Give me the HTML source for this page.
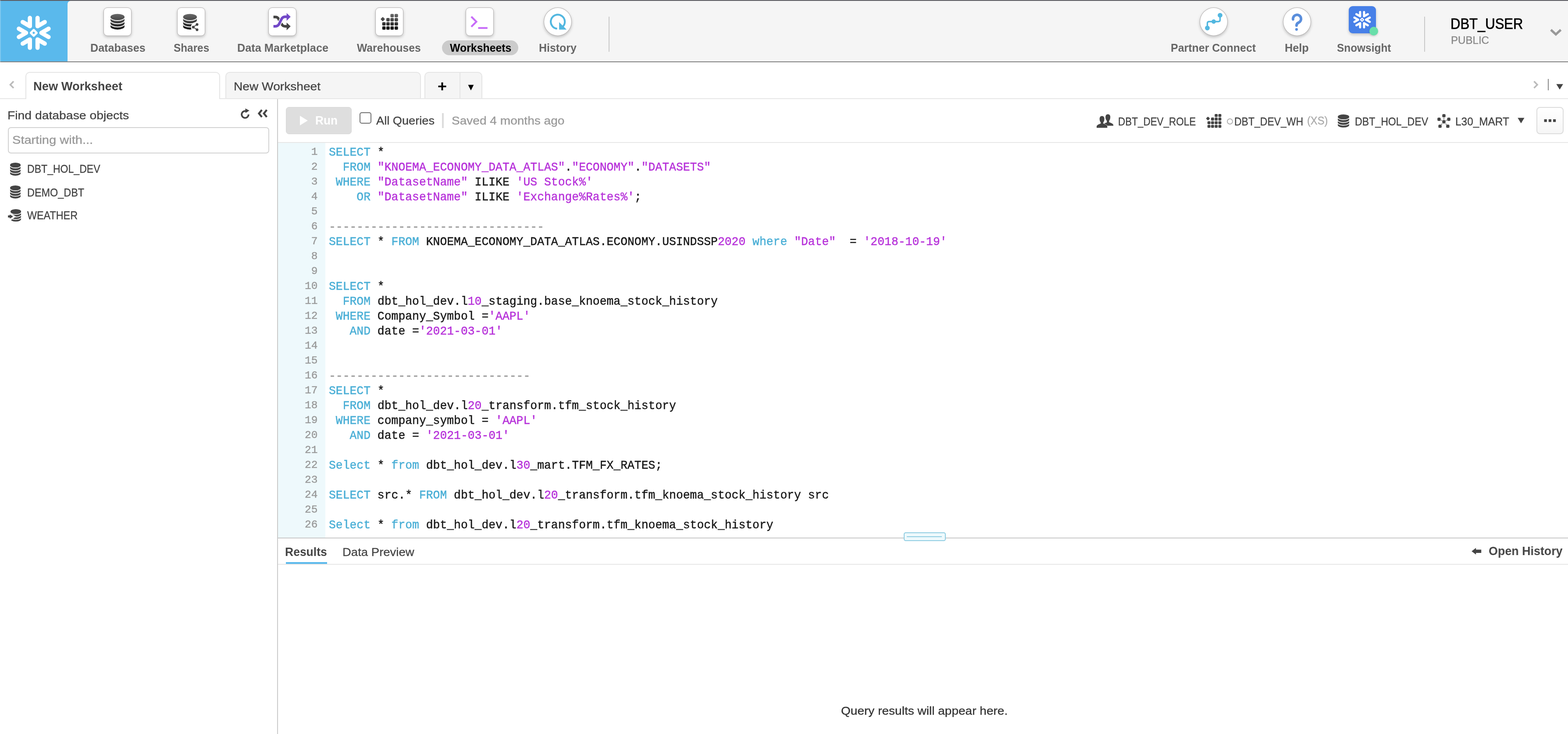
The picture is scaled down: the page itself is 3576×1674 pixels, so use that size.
<!DOCTYPE html>
<html lang="en">
<head>
<meta charset="utf-8">
<title>Snowflake Worksheets</title>
<style>
*{box-sizing:border-box}
html,body{margin:0;padding:0}
body{width:3576px;height:1674px;overflow:hidden;background:#fff;position:relative;will-change:transform;font-family:"Liberation Sans",sans-serif;color:#444}
.ab{position:absolute}
.tx{position:absolute;white-space:nowrap;line-height:1;transform-origin:0 0}
#top{position:absolute;left:0;top:0;width:3576px;height:142px;background:#f5f5f5;border-top:2px solid #5c5c62;border-bottom:2px solid #828282}
#logo{position:absolute;left:0;top:0;width:162px;height:138px;background:#5ab9ec}
#edge{position:absolute;left:0;top:0;width:2px;height:142px;background:rgba(255,255,255,.22)}
#navbg{position:absolute;left:154px;top:0;width:40px;height:138px;background:#f5f5f5;border-top-left-radius:7px}
.nb{position:absolute;top:17px;width:64px;height:65px;background:#fff;border:1px solid #b3b0b0;border-radius:9px;box-shadow:0 3px 6px rgba(0,0,0,.22)}
.nb svg{position:absolute;left:-1px;top:-1px}
.nb.rnd{border-radius:50%}
.vsep{position:absolute;width:2px;background:#c9c9c9}
#pill{position:absolute;left:1008px;top:92px;width:174px;height:34px;border-radius:17px;background:#cbcbcb}
.tab{position:absolute;top:164px;height:62px;border:2px solid #e5e5e5;border-bottom:none;border-radius:10px 10px 0 0;background:#f5f5f5}
.hl{position:absolute;height:2px;background:#e7e7e7}
#side{position:absolute;left:0;top:226px;width:632px;height:1448px;background:#fff}
#split{position:absolute;left:632px;top:226px;width:2px;height:1448px;background:#cacaca}
#search{position:absolute;left:18px;top:290px;width:596px;height:60px;border:2px solid #d2d2d2;border-radius:7px;background:#fff}
#run{position:absolute;left:652px;top:244px;width:150px;height:62px;border-radius:7px;background:#dedede;border:1px solid #d6d6d6}
#cb{position:absolute;left:820px;top:256px;width:26.5px;height:26px;border:2px solid #707070;border-radius:5px;background:#fff}
#more{position:absolute;left:3504px;top:244px;width:62px;height:62px;border:2px solid #dcdcdc;border-radius:8px;background:linear-gradient(#fff,#f6f6f6)}
#ed{position:absolute;left:634px;top:326px;width:2942px;height:900px;background:#fff;overflow:hidden;font-family:"Liberation Mono",monospace}
#gut{position:absolute;left:0;top:0;width:108px;height:900px;background:#eef9fc}
#lines{position:absolute;left:0;top:6px;width:2942px}
.ln{position:relative;height:34px;line-height:34px;white-space:pre}
.no{position:absolute;left:0;top:-1.8px;width:90.5px;text-align:right;font-size:24.5px;color:#999;-webkit-text-stroke-width:0.4px}
.cd{position:absolute;left:116px;top:-1px;font-size:26.4px;color:#1a1a1a;-webkit-text-stroke-width:0.5px;transform-origin:0 24px;transform:scaleY(1.06)}
.k{color:#4bafd6}
.s{color:#b733da}
.c{color:#999}
#grip{position:absolute;left:2060.6px;top:1214px;width:96px;height:20px;border:2px solid #90cde2;border-radius:4.5px;background:#eef9fc}
#grip i{position:absolute;left:5px;right:6.5px;top:7px;height:2px;background:#90cde2}
</style>
</head>
<body>
<div id="top">
  <div id="logo"></div><div id="navbg"></div>
</div>
<svg class="ab" style="left:0;top:0" width="154" height="142" viewBox="0 0 154 142"><g transform="translate(76.9,74.9) scale(1)" fill="none" stroke="#fff" stroke-width="9.7" stroke-linecap="round" stroke-linejoin="round"><path d="M33.87,-9.45 L17.5,0 L33.87,9.45" transform="rotate(0)"/><path d="M33.87,-9.45 L17.5,0 L33.87,9.45" transform="rotate(60)"/><path d="M33.87,-9.45 L17.5,0 L33.87,9.45" transform="rotate(120)"/><path d="M33.87,-9.45 L17.5,0 L33.87,9.45" transform="rotate(180)"/><path d="M33.87,-9.45 L17.5,0 L33.87,9.45" transform="rotate(240)"/><path d="M33.87,-9.45 L17.5,0 L33.87,9.45" transform="rotate(300)"/><rect x="-4.7" y="-4.7" width="9.4" height="9.4" transform="rotate(45)" stroke-width="4.9"/></g></svg>
<div class="nb" style="left:236px"><svg width="64" height="64" viewBox="0 0 64 64"><defs><linearGradient id="gd" gradientUnits="userSpaceOnUse" x1="0" y1="14" x2="0" y2="51"><stop offset="0" stop-color="#6b6b6b"/><stop offset="1" stop-color="#141414"/></linearGradient></defs><path d="M16,21.7 L16,43.400000000000006 A16,7 0 0 0 48,43.400000000000006 L48,21.7 Z" fill="url(#gd)"/><path d="M15,21.70 A17,8.3 0 0 0 49,21.70" fill="none" stroke="#fff" stroke-width="2.0"/><path d="M15,28.93 A17,8.3 0 0 0 49,28.93" fill="none" stroke="#fff" stroke-width="2.0"/><path d="M15,36.17 A17,8.3 0 0 0 49,36.17" fill="none" stroke="#fff" stroke-width="2.0"/><ellipse cx="32" cy="21.7" rx="16" ry="7" fill="url(#gd)"/></svg></div>
<div class="nb" style="left:404px"><svg width="64" height="64" viewBox="0 0 64 64"><defs><linearGradient id="gs" gradientUnits="userSpaceOnUse" x1="0" y1="14" x2="0" y2="51"><stop offset="0" stop-color="#6b6b6b"/><stop offset="1" stop-color="#141414"/></linearGradient></defs><path d="M13.600000000000001,21.7 L13.600000000000001,43.400000000000006 A15.7,7 0 0 0 45.0,43.400000000000006 L45.0,21.7 Z" fill="url(#gs)"/><path d="M12.600000000000001,21.70 A16.7,8.3 0 0 0 46.0,21.70" fill="none" stroke="#fff" stroke-width="2.0"/><path d="M12.600000000000001,28.93 A16.7,8.3 0 0 0 46.0,28.93" fill="none" stroke="#fff" stroke-width="2.0"/><path d="M12.600000000000001,36.17 A16.7,8.3 0 0 0 46.0,36.17" fill="none" stroke="#fff" stroke-width="2.0"/><ellipse cx="29.3" cy="21.7" rx="15.7" ry="7" fill="url(#gs)"/><circle cx="43" cy="45" r="11.5" fill="#fff"/><g fill="#444" stroke="#444" stroke-width="1.8"><path d="M45.4,38.8 L36.7,44.8 L45.4,50.8" fill="none"/><circle cx="45.4" cy="38.8" r="2.2"/><circle cx="36.7" cy="44.8" r="2.2"/><circle cx="45.4" cy="50.8" r="2.2"/></g></svg></div>
<div class="nb" style="left:612px"><svg width="64" height="64" viewBox="0 0 64 64"><g fill="none" stroke-width="6"><path d="M11.6,21.8 H16 C22,21.8 23.5,26 25.2,30" stroke="#444"/><path d="M29.5,36 C31,40 33,42.9 38,42.9 H42" stroke="#444"/><path d="M17,42.9 C23,42.9 24.5,38 27.3,32 C30,26 32,21.2 37,21.2" stroke="#fff" stroke-width="9"/><path d="M11.6,42.9 H16 C23,42.9 24.5,38 27.3,32 C30,26 32,21.2 38,21.2 H42" stroke="#7248c8"/></g><path d="M41.6,12.8 L50.8,21.2 L41.6,30.5 Z" fill="#7248c8"/><path d="M41.6,34.6 L50.8,42.9 L41.6,52 Z" fill="#444"/></svg></div>
<div class="nb" style="left:856px"><svg width="64" height="64" viewBox="0 0 64 64"><defs><linearGradient id="gw" gradientUnits="userSpaceOnUse" x1="0" y1="14" x2="0" y2="51"><stop offset="0" stop-color="#6b6b6b"/><stop offset="1" stop-color="#101010"/></linearGradient></defs><g fill="url(#gw)"><rect x="34.4" y="14.7" width="7.8" height="7.8" rx="2"/><rect x="43.9" y="14.7" width="7.8" height="7.8" rx="2"/><rect x="25.0" y="24.0" width="7.8" height="7.8" rx="2"/><rect x="34.4" y="24.0" width="7.8" height="7.8" rx="2"/><rect x="43.9" y="24.0" width="7.8" height="7.8" rx="2"/><rect x="15.7" y="33.5" width="7.8" height="7.8" rx="2"/><rect x="25.0" y="33.5" width="7.8" height="7.8" rx="2"/><rect x="34.4" y="33.5" width="7.8" height="7.8" rx="2"/><rect x="43.9" y="33.5" width="7.8" height="7.8" rx="2"/><rect x="15.7" y="42.9" width="7.8" height="7.8" rx="2"/><rect x="25.0" y="42.9" width="7.8" height="7.8" rx="2"/><rect x="34.4" y="42.9" width="7.8" height="7.8" rx="2"/><rect x="43.9" y="42.9" width="7.8" height="7.8" rx="2"/><rect x="13.3" y="22.9" width="7.4" height="7.4" rx="1.6" transform="rotate(45 17 26.6)"/></g></svg></div>
<div class="nb" style="left:1062px"><svg width="64" height="64" viewBox="0 0 64 64"><path d="M12.9,21.1 L24.4,32.5 L12.9,43.9" fill="none" stroke="#c76cf8" stroke-width="4.2"/><rect x="28.5" y="44.8" width="21.3" height="4.1" fill="#c76cf8"/></svg></div>
<div class="nb rnd" style="left:1240px"><svg width="64" height="64" viewBox="0 0 64 64"><path d="M30.6,48.4 A16,16 0 1 1 42.9,44.3" fill="none" stroke="#52b7e0" stroke-width="4.2"/><path d="M35.1,33.5 L35.1,50.6 L52.3,50.6 Z" fill="#52b7e0"/></svg></div>
<div class="nb rnd" style="left:2736px"><svg width="64" height="64" viewBox="0 0 64 64"><g fill="#52b7e0"><circle cx="46.5" cy="17.8" r="5.4"/><circle cx="32" cy="32.2" r="5"/><circle cx="17.5" cy="46.9" r="5.4"/></g><path d="M17.5,46.9 V36.2 Q17.5,32.2 21.5,32.2 H42.5 Q46.5,32.2 46.5,28.2 V17.8" fill="none" stroke="#52b7e0" stroke-width="3.4"/></svg></div>
<div class="nb rnd" style="left:2926px"><svg width="64" height="64" viewBox="0 0 64 64"><path d="M22.9,27.2 A9.2,9.2 0 1 1 35.5,34.6 Q30.9,36.4 30.9,41.3" fill="none" stroke="#5a8edc" stroke-width="6" stroke-linecap="round"/><circle cx="30.9" cy="50" r="3.1" fill="#5a8edc"/></svg></div>
<div id="edge"></div>
<div id="pill"></div>
<span class="tx" style="left:205.82px;top:97px;font-size:25px;font-weight:bold;transform:scaleX(1.0048);color:#666;">Databases</span><span class="tx" style="left:395.93px;top:97px;font-size:25px;font-weight:bold;transform:scaleX(0.9738);color:#666;">Shares</span><span class="tx" style="left:540.51px;top:97px;font-size:25px;font-weight:bold;transform:scaleX(1.0117);color:#666;">Data Marketplace</span><span class="tx" style="left:814.43px;top:97px;font-size:25px;font-weight:bold;transform:scaleX(0.9864);color:#666;">Warehouses</span><span class="tx" style="left:1025.52px;top:97px;font-size:25px;font-weight:bold;transform:scaleX(0.9935);color:#000;">Worksheets</span><span class="tx" style="left:1228.93px;top:97px;font-size:25px;font-weight:bold;transform:scaleX(0.9971);color:#666;">History</span><span class="tx" style="left:2669.73px;top:97px;font-size:25px;font-weight:bold;transform:scaleX(0.998);color:#666;">Partner Connect</span><span class="tx" style="left:2929.71px;top:97px;font-size:25px;font-weight:bold;transform:scaleX(1.0113);color:#666;">Help</span><span class="tx" style="left:3049.13px;top:97px;font-size:25px;font-weight:bold;transform:scaleX(0.9768);color:#666;">Snowsight</span>
<div class="vsep" style="left:1388px;top:38px;height:80px"></div>
<div class="vsep" style="left:3248px;top:38px;height:80px"></div>
<div class="ab" style="left:3076px;top:14px;width:62px;height:62px;border-radius:9px;background:#4780e8;box-shadow:0 3px 6px rgba(0,0,0,.2)"></div>
<svg class="ab" style="left:3076px;top:14px" width="62" height="62" viewBox="0 0 62 62"><g transform="translate(30.4,31) scale(0.515)" fill="none" stroke="#fff" stroke-width="9.7" stroke-linecap="round" stroke-linejoin="round"><path d="M33.87,-9.45 L17.5,0 L33.87,9.45" transform="rotate(0)"/><path d="M33.87,-9.45 L17.5,0 L33.87,9.45" transform="rotate(60)"/><path d="M33.87,-9.45 L17.5,0 L33.87,9.45" transform="rotate(120)"/><path d="M33.87,-9.45 L17.5,0 L33.87,9.45" transform="rotate(180)"/><path d="M33.87,-9.45 L17.5,0 L33.87,9.45" transform="rotate(240)"/><path d="M33.87,-9.45 L17.5,0 L33.87,9.45" transform="rotate(300)"/><rect x="-4.7" y="-4.7" width="9.4" height="9.4" transform="rotate(45)" stroke-width="4.9"/></g></svg>
<div class="ab" style="left:3123px;top:60.7px;width:20px;height:20px;border-radius:50%;background:#69dfaa;box-shadow:0 2px 4px rgba(0,0,0,.15)"></div>
<span class="tx" style="left:3308.24px;top:37px;font-size:34.5px;-webkit-text-stroke:0.7px;transform:scaleX(0.899);color:#000;">DBT_USER</span><span class="tx" style="left:3308.63px;top:80px;font-size:24px;-webkit-text-stroke:0.35px;transform:scaleX(1.0033);color:#888;">PUBLIC</span>
<svg class="ab" style="left:3533px;top:63px" width="31" height="22" viewBox="0 0 31 22"><path d="M4,5 L15.3,15.5 L26.6,5" fill="none" stroke="#999" stroke-width="5.2"/></svg>

<div class="hl" style="left:0;top:224px;width:3576px"></div>
<svg class="ab" style="left:18px;top:182px" width="18" height="24" viewBox="0 0 18 24"><path d="M13,3.5 L5.5,11.2 L13,18.8" fill="none" stroke="#bbb" stroke-width="3.6"/></svg>
<div class="tab" style="left:58px;width:444px;background:#fff"></div>
<div class="tab" style="left:514px;width:446px;height:60px"></div>
<div class="tab" style="left:968px;width:132px;height:60px"></div>
<div class="ab" style="left:1048px;top:166px;width:2px;height:58px;background:#e5e5e5"></div>
<span class="tx" style="left:76.27px;top:183px;font-size:27.5px;font-weight:bold;transform:scaleX(0.9937);color:#444;">New Worksheet</span><span class="tx" style="left:533.34px;top:184px;font-size:26px;-webkit-text-stroke:0.35px;transform:scaleX(1.0822);color:#444;">New Worksheet</span>
<span class="tx" style="left:998.48px;top:180.0px;font-size:34.7px;font-weight:bold;transform:scale(1.0368,1.0);color:#000">+</span><span class="tx" style="left:1062.95px;top:188.97px;font-size:21.4px;transform:scale(1.0339,1.018);color:#000">▼</span>
<svg class="ab" style="left:3494px;top:182px" width="18" height="24" viewBox="0 0 18 24"><path d="M4.5,3.5 L12,11.2 L4.5,18.8" fill="none" stroke="#bbb" stroke-width="3.6"/></svg>
<div class="ab" style="left:3530px;top:180px;width:2px;height:26px;background:#888"></div>
<span class="tx" style="left:3543.86px;top:185.95px;font-size:20.3px;transform:scale(1.3051,1.0621);color:#444">▼</span>

<div id="side"></div>
<div id="split"></div>
<span class="tx" style="left:16.63px;top:250px;font-size:26px;-webkit-text-stroke:0.35px;transform:scaleX(1.0896);color:#444;">Find database objects</span>
<svg class="ab" style="left:547px;top:246px" width="24" height="26" viewBox="0 0 24 26"><path d="M17.2,9.2 A7.8,7.8 0 1 0 19.8,15" fill="none" stroke="#444" stroke-width="3.8"/><path d="M12.5,1.2 L21.8,6.2 L12.5,11.4 Z" fill="#444"/></svg>
<svg class="ab" style="left:586px;top:247px" width="26" height="24" viewBox="0 0 26 24"><path d="M11.2,3.7 L4.6,11.8 L11.2,19.8 M22.4,3.7 L15.8,11.8 L22.4,19.8" fill="none" stroke="#444" stroke-width="4.4"/></svg>
<div id="search"></div>
<span class="tx" style="left:27.85px;top:306px;font-size:26px;-webkit-text-stroke:0.35px;transform:scaleX(1.1178);color:#999;">Starting with...</span>
<svg class="ab" style="left:23px;top:371px" width="24.2" height="30.2" viewBox="0 0 24.2 30.2"><path d="M0.0,5.5 L0.0,24.2 A12.1,5.5 0 0 0 24.2,24.2 L24.2,5.5 Z" fill="#444"/><path d="M-1.0,5.50 A13.1,6.6499999999999995 0 0 0 25.2,5.50" fill="none" stroke="#fff" stroke-width="1.7"/><path d="M-1.0,11.73 A13.1,6.6499999999999995 0 0 0 25.2,11.73" fill="none" stroke="#fff" stroke-width="1.7"/><path d="M-1.0,17.97 A13.1,6.6499999999999995 0 0 0 25.2,17.97" fill="none" stroke="#fff" stroke-width="1.7"/><ellipse cx="12.1" cy="5.5" rx="12.1" ry="5.5" fill="#444"/></svg><span class="tx" style="left:61.58px;top:373px;font-size:25px;-webkit-text-stroke:0.35px;transform:scaleX(0.9225);color:#444;">DBT_HOL_DEV</span>
<svg class="ab" style="left:23px;top:423.2px" width="24.2" height="30.2" viewBox="0 0 24.2 30.2"><path d="M0.0,5.5 L0.0,24.2 A12.1,5.5 0 0 0 24.2,24.2 L24.2,5.5 Z" fill="#444"/><path d="M-1.0,5.50 A13.1,6.6499999999999995 0 0 0 25.2,5.50" fill="none" stroke="#fff" stroke-width="1.7"/><path d="M-1.0,11.73 A13.1,6.6499999999999995 0 0 0 25.2,11.73" fill="none" stroke="#fff" stroke-width="1.7"/><path d="M-1.0,17.97 A13.1,6.6499999999999995 0 0 0 25.2,17.97" fill="none" stroke="#fff" stroke-width="1.7"/><ellipse cx="12.1" cy="5.5" rx="12.1" ry="5.5" fill="#444"/></svg><span class="tx" style="left:61.55px;top:427px;font-size:25px;-webkit-text-stroke:0.35px;transform:scaleX(0.9371);color:#444;">DEMO_DBT</span>
<svg class="ab" style="left:18.2px;top:476.8px" width="30.2" height="28.8" viewBox="0 0 30.2 28.8"><path d="M6.000000000000002,5.5 L6.000000000000002,22.8 A12.1,5.5 0 0 0 30.200000000000003,22.8 L30.200000000000003,5.5 Z" fill="#444"/><path d="M5.000000000000002,5.50 A13.1,6.6499999999999995 0 0 0 31.200000000000003,5.50" fill="none" stroke="#fff" stroke-width="1.7"/><path d="M5.000000000000002,11.27 A13.1,6.6499999999999995 0 0 0 31.200000000000003,11.27" fill="none" stroke="#fff" stroke-width="1.7"/><path d="M5.000000000000002,17.03 A13.1,6.6499999999999995 0 0 0 31.200000000000003,17.03" fill="none" stroke="#fff" stroke-width="1.7"/><ellipse cx="18.1" cy="5.5" rx="12.1" ry="5.5" fill="#444"/><path d="M4.5,10.5 L15,17 L4.5,24.5" fill="none" stroke="#fff" stroke-width="4"/><path d="M0.2,14.2 H4.2 V11.9 L11.8,16.6 L4.2,21.8 V18.9 H0.2 Z" fill="#444"/></svg><span class="tx" style="left:62.37px;top:479px;font-size:25px;-webkit-text-stroke:0.35px;transform:scaleX(0.9341);color:#444;">WEATHER</span>

<div id="run"></div>
<svg class="ab" style="left:682px;top:262px" width="22" height="26" viewBox="0 0 22 26"><path d="M2,2 L19.8,13 L2,24 Z" fill="#fff"/></svg>
<span class="tx" style="left:719.34px;top:262px;font-size:27px;font-weight:bold;transform:scaleX(0.9698);color:#fff;">Run</span>
<div id="cb"></div>
<span class="tx" style="left:858.06px;top:262px;font-size:26px;-webkit-text-stroke:0.35px;transform:scaleX(1.0464);color:#444;">All Queries</span>
<div class="ab" style="left:1008px;top:258px;width:4px;height:34px;background:#dcdcdc"></div>
<span class="tx" style="left:1030.01px;top:262px;font-size:26px;-webkit-text-stroke:0.35px;transform:scaleX(1.0793);color:#999;">Saved 4 months ago</span>
<svg class="ab" style="left:2500px;top:259px" width="41" height="34" viewBox="0 0 41 34"><g fill="#444"><path d="M16.5,27.7 V24.5 Q18,22 24.2,20.6 L24.2,16.5 Q21.2,13.5 21.2,8.8 Q21.2,1.6 26.7,1.6 Q32.2,1.6 32.2,8.8 Q32.2,13.5 29.5,16.6 L29.5,19.8 Q38.5,22.5 39.1,26 V27.7 Z"/><path d="M1,32.4 V28.8 Q2,25.5 10.3,22.8 L10.3,20.2 Q7.7,17.2 7.7,13 Q7.7,5.6 13.2,5.6 Q18.7,5.6 18.7,13 Q18.7,17.2 16.2,20.2 L16.2,22.8 Q24.5,25.5 25.3,28.8 V32.4 Z" stroke="#fff" stroke-width="1.2" paint-order="stroke"/></g></svg><span class="tx" style="left:2550.02px;top:265px;font-size:25px;-webkit-text-stroke:0.35px;transform:scaleX(0.8984);color:#444;">DBT_DEV_ROLE</span>
<svg class="ab" style="left:2740.3px;top:247.1px" width="50" height="50" viewBox="0 0 50 50"><g fill="#444" transform="scale(0.878)"><rect x="34.4" y="14.7" width="7.8" height="7.8" rx="2"/><rect x="43.9" y="14.7" width="7.8" height="7.8" rx="2"/><rect x="25.0" y="24.0" width="7.8" height="7.8" rx="2"/><rect x="34.4" y="24.0" width="7.8" height="7.8" rx="2"/><rect x="43.9" y="24.0" width="7.8" height="7.8" rx="2"/><rect x="15.7" y="33.5" width="7.8" height="7.8" rx="2"/><rect x="25.0" y="33.5" width="7.8" height="7.8" rx="2"/><rect x="34.4" y="33.5" width="7.8" height="7.8" rx="2"/><rect x="43.9" y="33.5" width="7.8" height="7.8" rx="2"/><rect x="15.7" y="42.9" width="7.8" height="7.8" rx="2"/><rect x="25.0" y="42.9" width="7.8" height="7.8" rx="2"/><rect x="34.4" y="42.9" width="7.8" height="7.8" rx="2"/><rect x="43.9" y="42.9" width="7.8" height="7.8" rx="2"/><rect x="13.3" y="22.9" width="7.4" height="7.4" rx="1.6" transform="rotate(45 17 26.6)"/></g></svg>
<div class="ab" style="left:2798px;top:270px;width:14px;height:14px;border:2px solid #b0b0b0;border-radius:50%"></div>
<span class="tx" style="left:2815.18px;top:265px;font-size:25px;-webkit-text-stroke:0.35px;transform:scaleX(0.9198);color:#444;">DBT_DEV_WH</span><span class="tx" style="left:2981.49px;top:263px;font-size:25px;-webkit-text-stroke:0.35px;transform:scaleX(0.9455);color:#aaa;">(XS)</span>
<svg class="ab" style="left:3051px;top:261px" width="26.0" height="30.3" viewBox="0 0 26.0 30.3"><path d="M0.0,5.5 L0.0,24.3 A13.0,5.5 0 0 0 26.0,24.3 L26.0,5.5 Z" fill="#444"/><path d="M-1.0,5.50 A14.0,6.6499999999999995 0 0 0 27.0,5.50" fill="none" stroke="#fff" stroke-width="1.7"/><path d="M-1.0,11.77 A14.0,6.6499999999999995 0 0 0 27.0,11.77" fill="none" stroke="#fff" stroke-width="1.7"/><path d="M-1.0,18.03 A14.0,6.6499999999999995 0 0 0 27.0,18.03" fill="none" stroke="#fff" stroke-width="1.7"/><ellipse cx="13.0" cy="5.5" rx="13.0" ry="5.5" fill="#444"/></svg><span class="tx" style="left:3090.27px;top:265px;font-size:25px;-webkit-text-stroke:0.35px;transform:scaleX(0.9253);color:#444;">DBT_HOL_DEV</span>
<svg class="ab" style="left:3276px;top:258px" width="34" height="36" viewBox="0 0 34 36"><g fill="#444"><rect x="13.3" y="16.1" width="7.4" height="7.4" rx="2.2"/><rect x="13.3" y="2.2" width="7.4" height="7.4" rx="2.2"/><rect x="2.2" y="10.3" width="7.4" height="7.4" rx="2.2"/><rect x="24.4" y="10.3" width="7.4" height="7.4" rx="2.2"/><rect x="4.4" y="26.2" width="7.4" height="7.4" rx="2.2"/><rect x="22.2" y="26.2" width="7.4" height="7.4" rx="2.2"/></g><g stroke="#555" stroke-width="1.3"><path d="M17,10.6 V15.2 M10.3,15.6 L12.6,17.2 M23.7,15.6 L21.4,17.2 M13.2,24 L11,26.2 M20.8,24 L23,26.2"/></g></svg><span class="tx" style="left:3319.48px;top:265px;font-size:25px;-webkit-text-stroke:0.35px;transform:scaleX(0.9757);color:#444;">L30_MART</span>
<span class="tx" style="left:3455.85px;top:263.05px;font-size:20.3px;transform:scale(1.2866,1.0621);color:#444">▼</span>
<div id="more"><svg width="58" height="58" viewBox="0 0 58 58" style="position:absolute;left:0;top:0"><g fill="#444"><rect x="15.6" y="26" width="6.2" height="6.2"/><rect x="25.8" y="26" width="6.2" height="6.2"/><rect x="36" y="26" width="6.2" height="6.2"/></g></svg></div>
<div class="hl" style="left:634px;top:324px;width:2942px"></div>

<div id="ed"><div id="gut"></div><div id="lines">
<div class="ln"><span class="no">1</span><span class="cd"><span class="k">SELECT</span> *</span></div>
<div class="ln"><span class="no">2</span><span class="cd">  <span class="k">FROM</span> <span class="s">"KNOEMA_ECONOMY_DATA_ATLAS"</span>.<span class="s">"ECONOMY"</span>.<span class="s">"DATASETS"</span></span></div>
<div class="ln"><span class="no">3</span><span class="cd"> <span class="k">WHERE</span> <span class="s">"DatasetName"</span> ILIKE <span class="s">'US Stock%'</span></span></div>
<div class="ln"><span class="no">4</span><span class="cd">    <span class="k">OR</span> <span class="s">"DatasetName"</span> ILIKE <span class="s">'Exchange%Rates%'</span>;</span></div>
<div class="ln"><span class="no">5</span><span class="cd"></span></div>
<div class="ln"><span class="no">6</span><span class="cd"><span class="c">-------------------------------</span></span></div>
<div class="ln"><span class="no">7</span><span class="cd"><span class="k">SELECT</span> * <span class="k">FROM</span> KNOEMA_ECONOMY_DATA_ATLAS.ECONOMY.USINDSSP<span class="s">2020</span> <span class="k">where</span> <span class="s">"Date"</span>  = <span class="s">'2018-10-19'</span></span></div>
<div class="ln"><span class="no">8</span><span class="cd"></span></div>
<div class="ln"><span class="no">9</span><span class="cd"></span></div>
<div class="ln"><span class="no">10</span><span class="cd"><span class="k">SELECT</span> *</span></div>
<div class="ln"><span class="no">11</span><span class="cd">  <span class="k">FROM</span> dbt_hol_dev.l<span class="s">10</span>_staging.base_knoema_stock_history</span></div>
<div class="ln"><span class="no">12</span><span class="cd"> <span class="k">WHERE</span> Company_Symbol =<span class="s">'AAPL'</span></span></div>
<div class="ln"><span class="no">13</span><span class="cd">   <span class="k">AND</span> date =<span class="s">'2021-03-01'</span></span></div>
<div class="ln"><span class="no">14</span><span class="cd"></span></div>
<div class="ln"><span class="no">15</span><span class="cd"></span></div>
<div class="ln"><span class="no">16</span><span class="cd"><span class="c">-----------------------------</span></span></div>
<div class="ln"><span class="no">17</span><span class="cd"><span class="k">SELECT</span> *</span></div>
<div class="ln"><span class="no">18</span><span class="cd">  <span class="k">FROM</span> dbt_hol_dev.l<span class="s">20</span>_transform.tfm_stock_history</span></div>
<div class="ln"><span class="no">19</span><span class="cd"> <span class="k">WHERE</span> company_symbol = <span class="s">'AAPL'</span></span></div>
<div class="ln"><span class="no">20</span><span class="cd">   <span class="k">AND</span> date = <span class="s">'2021-03-01'</span></span></div>
<div class="ln"><span class="no">21</span><span class="cd"></span></div>
<div class="ln"><span class="no">22</span><span class="cd"><span class="k">Select</span> * <span class="k">from</span> dbt_hol_dev.l<span class="s">30</span>_mart.TFM_FX_RATES;</span></div>
<div class="ln"><span class="no">23</span><span class="cd"></span></div>
<div class="ln"><span class="no">24</span><span class="cd"><span class="k">SELECT</span> src.* <span class="k">FROM</span> dbt_hol_dev.l<span class="s">20</span>_transform.tfm_knoema_stock_history src</span></div>
<div class="ln"><span class="no">25</span><span class="cd"></span></div>
<div class="ln"><span class="no">26</span><span class="cd"><span class="k">Select</span> * <span class="k">from</span> dbt_hol_dev.l<span class="s">20</span>_transform.tfm_knoema_stock_history</span></div>
</div></div>
<div class="ab" style="left:634px;top:1226px;width:2942px;height:2px;background:#c9c9c9"></div>
<div id="grip"><i></i></div>
<span class="tx" style="left:650.42px;top:1245px;font-size:27.5px;font-weight:bold;transform:scaleX(0.9638);color:#444;">Results</span><span class="tx" style="left:780.69px;top:1246px;font-size:26px;-webkit-text-stroke:0.35px;transform:scaleX(1.0584);color:#444;">Data Preview</span>
<div class="ab" style="left:652px;top:1282px;width:94px;height:4px;background:#5ab9ec"></div>
<div class="hl" style="left:634px;top:1286px;width:2942px"></div>
<svg class="ab" style="left:3355px;top:1248px" width="26" height="18" viewBox="0 0 26 18"><path d="M1.2,9.2 L11.2,1.6 V5.5 H23.2 V12.9 H11.2 V16.8 Z" fill="#444"/></svg>
<span class="tx" style="left:3395.04px;top:1243px;font-size:27.5px;font-weight:bold;transform:scaleX(0.9765);color:#444;">Open History</span>
<span class="tx" style="left:1917.71px;top:1608px;font-size:26px;-webkit-text-stroke:0.35px;transform:scaleX(1.0784);color:#333;">Query results will appear here.</span>
</body>
</html>
